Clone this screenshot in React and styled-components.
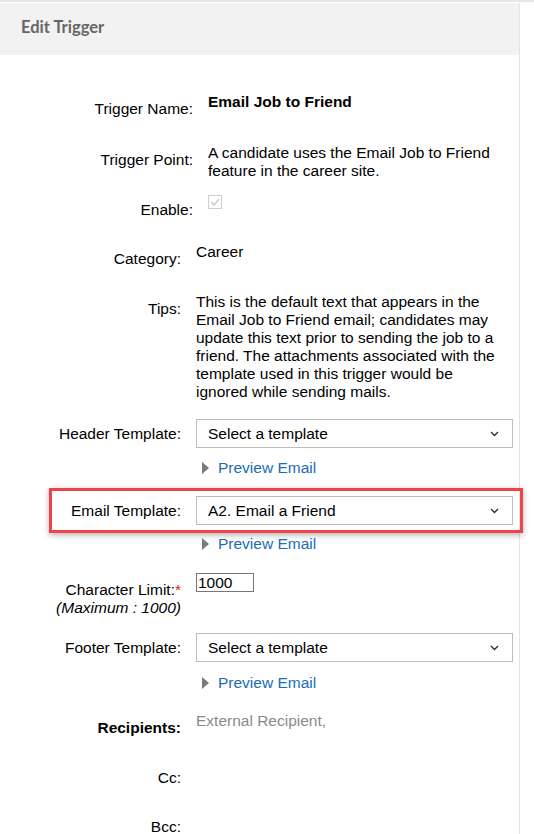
import styled, { createGlobalStyle } from "styled-components";

const GlobalStyle = createGlobalStyle`
  * { box-sizing: border-box; }
  body {
    margin: 0;
    background: #fff;
    color: #000;
    font-family: "Liberation Sans", Arial, sans-serif;
    font-size: 15.5px;
  }
`;

const Page = styled.div`
  border-top: 2px solid #e6e6e6;
  min-height: 834px;
  overflow: hidden;
`;

const Panel = styled.div`
  width: 520px;
  min-height: 832px;
  border-right: 1px solid #e3e3e3;
`;

const Header = styled.div`
  height: 52px;
  margin-top: 1px;
  background: #f2f2f2;
  display: flex;
  align-items: center;
  padding: 0 0 4px 21px;
  font-family: Lato, "Liberation Sans", sans-serif;
  font-weight: 700;
  font-size: 16.5px;
  color: #666;
`;

const Body = styled.div`
  padding-top: 38px;
  display: flex;
  flex-direction: column;
`;

const Row = styled.div`
  display: flex;
  align-items: ${(p) => (p.$center ? "center" : "flex-start")};
  gap: 15px;
  min-height: ${(p) => p.$h || 0}px;
  margin-bottom: ${(p) => p.$mb || 0}px;
  line-height: 18px;
`;

const Label = styled.div`
  width: ${(p) => p.$w}px;
  flex: none;
  text-align: right;
  padding-top: ${(p) => p.$offset ?? 7}px;
  font-weight: ${(p) => (p.$bold ? 700 : 400)};
`;

const Value = styled.div`
  width: ${(p) => p.$w || 300}px;
  font-weight: ${(p) => (p.$bold ? 700 : 400)};
  color: ${(p) => (p.$muted ? "#8a8a8a" : "#000")};
`;

const Required = styled.span`
  color: #e02020;
`;

const Hint = styled.div`
  font-style: italic;
`;

const CheckBox = styled.div`
  width: 14px;
  height: 14px;
  border: 1px solid #cfcfcf;
  display: flex;
  align-items: center;
  justify-content: center;
  margin-top: 1px;
`;

const Select = styled.div`
  width: 317px;
  height: 29px;
  border: 1px solid #bdbdbd;
  display: flex;
  align-items: center;
  justify-content: space-between;
  padding: 0 13px 0 11px;
  background: #fff;
`;

const Preview = styled.div`
  display: flex;
  align-items: center;
  gap: 9px;
  padding-left: 202px;
  margin-bottom: ${(p) => p.$mb || 0}px;
  line-height: 18px;
  color: #1b6db5;
`;

const Triangle = styled.span`
  width: 0;
  height: 0;
  border-top: 6px solid transparent;
  border-bottom: 6px solid transparent;
  border-left: 7px solid #7a7a7a;
`;

const Highlight = styled.div`
  margin-left: 49px;
  width: 474px;
  border: 3px solid #f0424a;
  padding: 5px 0 5px 0;
  box-shadow: 0 2px 6px rgba(0, 0, 0, 0.3);
  margin-bottom: 2px;
`;

const LimitInput = styled.div`
  width: 58px;
  height: 19px;
  border: 1px solid #777;
  line-height: 17px;
  padding-left: 1px;
`;

const Chevron = () => (
  <svg width="9" height="6" viewBox="0 0 9 6">
    <path d="M1 1l3.5 3.5L8 1" fill="none" stroke="#1f2b45" strokeWidth="1.3" />
  </svg>
);

const TemplateSelect = ({ children }) => (
  <Select>
    <span>{children}</span>
    <Chevron />
  </Select>
);

export default function App() {
  return (
    <Page>
      <GlobalStyle />
      <Panel>
        <Header>Edit Trigger</Header>
        <Body>
          <Row $h={51}>
            <Label $w={193}>Trigger Name:</Label>
            <Value $bold>Email Job to Friend</Value>
          </Row>
          <Row $h={50}>
            <Label $w={193}>Trigger Point:</Label>
            <Value>A candidate uses the Email Job to Friend feature in the career site.</Value>
          </Row>
          <Row $h={49}>
            <Label $w={193}>Enable:</Label>
            <CheckBox>
              <svg width="10" height="8" viewBox="0 0 10 8">
                <path d="M1 4l3 3 5-6" fill="none" stroke="#c4c4c4" strokeWidth="1.2" />
              </svg>
            </CheckBox>
          </Row>
          <Row $h={50}>
            <Label $w={181}>Category:</Label>
            <Value>Career</Value>
          </Row>
          <Row $h={126}>
            <Label $w={181}>Tips:</Label>
            <Value $w={304}>
              This is the default text that appears in the Email Job to Friend email; candidates may
              update this text prior to sending the job to a friend. The attachments associated with
              the template used in this trigger would be ignored while sending mails.
            </Value>
          </Row>
          <Row $center $mb={11}>
            <Label $w={181} $offset={0}>Header Template:</Label>
            <TemplateSelect>Select a template</TemplateSelect>
          </Row>
          <Preview $mb={11}>
            <Triangle />
            Preview Email
          </Preview>
          <Highlight>
            <Row $center>
              <Label $w={129} $offset={0}>Email Template:</Label>
              <TemplateSelect>A2. Email a Friend</TemplateSelect>
            </Row>
          </Highlight>
          <Preview $mb={20}>
            <Triangle />
            Preview Email
          </Preview>
          <Row $h={60}>
            <Label $w={181} $offset={8}>
              Character Limit:<Required>*</Required>
              <Hint>(Maximum : 1000)</Hint>
            </Label>
            <LimitInput>1000</LimitInput>
          </Row>
          <Row $center $mb={12}>
            <Label $w={181} $offset={0}>Footer Template:</Label>
            <TemplateSelect>Select a template</TemplateSelect>
          </Row>
          <Preview $mb={20}>
            <Triangle />
            Preview Email
          </Preview>
          <Row $h={50}>
            <Label $w={181} $bold>Recipients:</Label>
            <Value $muted>External Recipient,</Value>
          </Row>
          <Row $h={49}>
            <Label $w={181}>Cc:</Label>
          </Row>
          <Row $h={50}>
            <Label $w={181}>Bcc:</Label>
          </Row>
        </Body>
      </Panel>
    </Page>
  );
}
